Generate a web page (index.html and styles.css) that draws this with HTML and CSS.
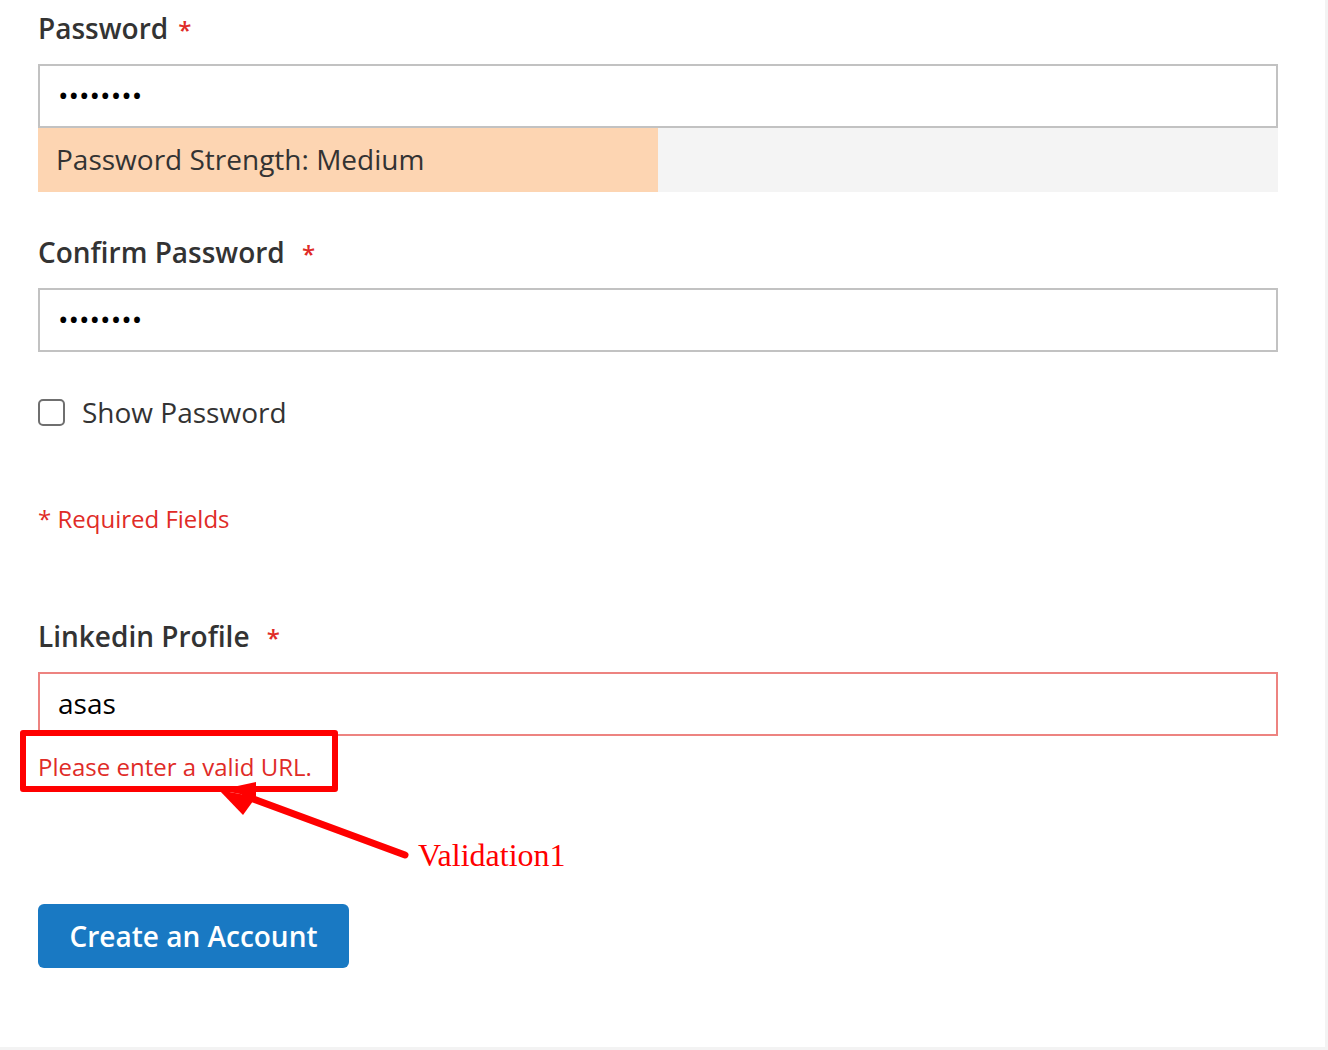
FILE: index.html
```html
<!DOCTYPE html>
<html lang="en">
<head>
<meta charset="utf-8">
<title>Create an Account</title>
<link rel="stylesheet" href="styles.css">
</head>
<body>
<div class="page">
  <form class="form">
    <div class="field">
      <label class="label">Password<span class="req">*</span></label>
      <div class="input">••••••••</div>
      <div class="meter"><div class="meter-fill" style="width:50%">Password Strength: Medium</div></div>
    </div>
    <div class="field field-confirm">
      <label class="label">Confirm Password <span class="req">*</span></label>
      <div class="input">••••••••</div>
    </div>
    <div class="check-row">
      <span class="checkbox"></span>
      <span class="check-label">Show Password</span>
    </div>
    <div class="required-note">* Required Fields</div>
    <div class="field field-linkedin">
      <label class="label">Linkedin Profile <span class="req">*</span></label>
      <div class="input input-error">asas</div>
      <div class="error-msg">Please enter a valid URL.</div>
    </div>
    <div class="actions">
      <button type="button" class="btn">Create an Account</button>
    </div>
  </form>

  <div class="annot-box"></div>
  <svg class="annot-arrow" width="420" height="120" viewBox="0 0 420 120">
    <line x1="405" y1="91" x2="245" y2="32" stroke="#ff0000" stroke-width="7" stroke-linecap="round"/>
    <polygon points="219,26 256,33 243,51" fill="#ff0000"/>
    <polygon points="219,26 256,18 256,33" fill="#ff0000"/>
  </svg>
  <div class="annot-text">Validation1</div>
</div>
</body>
</html>
```
FILE: styles.css
```css
html, body {
  margin: 0;
  padding: 0;
  background: #f3f3f3;
}
.page {
  position: relative;
  width: 1325px;
  height: 1047px;
  background: #ffffff;
  font-family: "Open Sans", "Liberation Sans", sans-serif;
  color: #333333;
}
.form {
  width: 1240px;
  padding: 8px 0 0 38px;
}
.label {
  display: block;
  font-size: 28px;
  font-weight: 600;
  line-height: 40px;
  height: 40px;
  margin-bottom: 16px;
  color: #333333;
}
.req {
  color: #e02b27;
  font-size: 24px;
  margin-left: 10px;
}
.input {
  box-sizing: border-box;
  height: 64px;
  border: 2px solid #c2c2c2;
  background: #fff;
  padding: 0 18px;
  font-size: 28px;
  line-height: 58px;
  color: #000;
}
.meter {
  height: 64px;
  background: #f4f4f4;
}
.meter-fill {
  box-sizing: border-box;
  height: 64px;
  background: #fdd5b2;
  padding: 0 18px;
  font-size: 28px;
  line-height: 62px;
  color: #333;
  white-space: nowrap;
}
.field-confirm {
  margin-top: 40px;
}
.check-row {
  margin-top: 40px;
  height: 40px;
  display: flex;
  align-items: center;
  gap: 17px;
}
.checkbox {
  box-sizing: border-box;
  width: 27px;
  height: 27px;
  border: 2px solid #6f6f6f;
  border-radius: 5px;
  background: #fff;
}
.check-label {
  font-size: 28px;
  color: #333;
}
.required-note {
  margin-top: 70px;
  font-size: 24px;
  line-height: 34px;
  color: #e02b27;
}
.field-linkedin {
  margin-top: 80px;
}
.input-error {
  border-color: #ed8380;
}
.error-msg {
  margin-top: 14px;
  font-size: 24px;
  line-height: 34px;
  color: #e02b27;
}
.actions {
  margin-top: 120px;
}
.btn {
  box-sizing: border-box;
  height: 64px;
  width: 311px;
  padding: 0;
  border: 0;
  border-radius: 6px;
  background: #1979c3;
  color: #fff;
  font-family: "Open Sans", "Liberation Sans", sans-serif;
  font-size: 28px;
  font-weight: 600;
}
.annot-box {
  position: absolute;
  left: 20px;
  top: 730px;
  width: 318px;
  height: 62px;
  box-sizing: border-box;
  border: 6px solid #ff0000;
  border-radius: 3px;
}
.annot-arrow {
  position: absolute;
  left: 0;
  top: 764px;
}
.annot-text {
  position: absolute;
  left: 418px;
  top: 835px;
  font-family: "Liberation Serif", "Times New Roman", serif;
  font-size: 32px;
  line-height: 40px;
  color: #ff0000;
}
```
